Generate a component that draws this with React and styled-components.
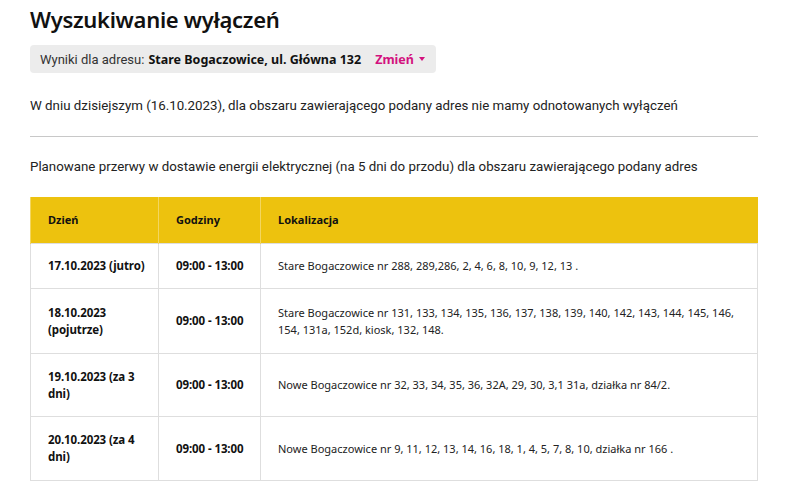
import React from 'react';
import styled, { createGlobalStyle } from 'styled-components';

const Global = createGlobalStyle`
  body {
    margin: 0;
    background: #ffffff;
    font-family: Roboto, "Noto Sans", sans-serif;
    color: #222222;
  }
`

const Page = styled.div`
  width: 728px;
  padding: 5px 0 0 30px;
`

const Title = styled.h1`
  margin: 0;
  font-family: "Noto Sans", sans-serif;
  font-size: 22px;
  font-weight: 600;
  color: #111;
  line-height: 28px;
  letter-spacing: -0.3px;
`

const AddressBar = styled.div`
  display: inline-flex;
  align-items: center;
  margin-top: 12px;
  height: 28px;
  padding: 0 11px 0 10px;
  background: #ececec;
  border-radius: 4px;
  font-size: 13px;
  color: #333;
`

const Strong = styled.strong`
  font-family: "Noto Sans", sans-serif;
  font-weight: 700;
  font-size: 12.5px;
  color: #111;
  margin-left: 4px;
`

const Change = styled.span`
  display: inline-flex;
  align-items: center;
  margin-left: 14px;
  font-family: "Noto Sans", sans-serif;
  font-weight: 700;
  font-size: 12.5px;
  color: #d3117e;
  &::after {
    content: "";
    margin-left: 5px;
    border-left: 3.5px solid transparent;
    border-right: 3.5px solid transparent;
    border-top: 4px solid #d3117e;
  }
`

const Text = styled.p`
  margin: 0;
  font-size: 13.3px;
  line-height: 18px;
  color: #222;
`

const Divider = styled.hr`
  margin: 21px 0 21px;
  border: 0;
  border-top: 1px solid #c8c8c8;
`

const Table = styled.table`
  width: 100%;
  margin-top: 21px;
  border-collapse: collapse;
  table-layout: fixed;
  font-family: "Noto Sans", sans-serif;
  font-size: 11px;
  color: #111;
`

const Head = styled.th`
  box-sizing: border-box;
  background: #edc20e;
  text-align: left;
  font-weight: 700;
  height: 46px;
  padding: 0 17px;
  border-left: 1px solid #f3d660;
  width: ${(p) => p.$w || 'auto'};
`

const Cell = styled.td`
  height: ${(p) => p.$h}px;
  padding: 0 ${(p) => (p.$bold ? 6 : 17)}px 0 17px;
  border: 1px solid #dedede;
  font-size: ${(p) => (p.$bold ? 11.5 : 11)}px;
  font-weight: ${(p) => (p.$bold ? 700 : 400)};
  letter-spacing: ${(p) => (p.$bold ? '-0.1px' : '0')};
  line-height: 17px;
  color: ${(p) => (p.$bold ? '#111' : '#222')};
`

const rows = [
  { day: '17.10.2023 (jutro)', loc: 'Stare Bogaczowice nr 288, 289,286, 2, 4, 6, 8, 10, 9, 12, 13 .', h: 44 },
  { day: '18.10.2023 (pojutrze)', loc: 'Stare Bogaczowice nr 131, 133, 134, 135, 136, 137, 138, 139, 140, 142, 143, 144, 145, 146, 154, 131a, 152d, kiosk, 132, 148.', h: 64 },
  { day: '19.10.2023 (za 3 dni)', loc: 'Nowe Bogaczowice nr 32, 33, 34, 35, 36, 32A, 29, 30, 3,1 31a, działka nr 84/2.', h: 62 },
  { day: '20.10.2023 (za 4 dni)', loc: 'Nowe Bogaczowice nr 9, 11, 12, 13, 14, 16, 18, 1, 4, 5, 7, 8, 10, działka nr 166 .', h: 63 },
]

export default function App() {
  return (
    <Page>
      <Global />
      <Title>Wyszukiwanie wyłączeń</Title>
      <AddressBar>
        Wyniki dla adresu:<Strong>Stare Bogaczowice, ul. Główna 132</Strong>
        <Change>Zmień</Change>
      </AddressBar>
      <Text style={{ marginTop: 24 }}>
        W dniu dzisiejszym (16.10.2023), dla obszaru zawierającego podany adres nie mamy odnotowanych wyłączeń
      </Text>
      <Divider />
      <Text>
        Planowane przerwy w dostawie energii elektrycznej (na 5 dni do przodu) dla obszaru zawierającego podany adres
      </Text>
      <Table>
        <thead>
          <tr>
            <Head $w="128px">Dzień</Head>
            <Head $w="102px">Godziny</Head>
            <Head>Lokalizacja</Head>
          </tr>
        </thead>
        <tbody>
          {rows.map((r) => (
            <tr key={r.day}>
              <Cell $h={r.h} $bold>{r.day}</Cell>
              <Cell $h={r.h} $bold>09:00 - 13:00</Cell>
              <Cell $h={r.h}>{r.loc}</Cell>
            </tr>
          ))}
        </tbody>
      </Table>
    </Page>
  )
}
